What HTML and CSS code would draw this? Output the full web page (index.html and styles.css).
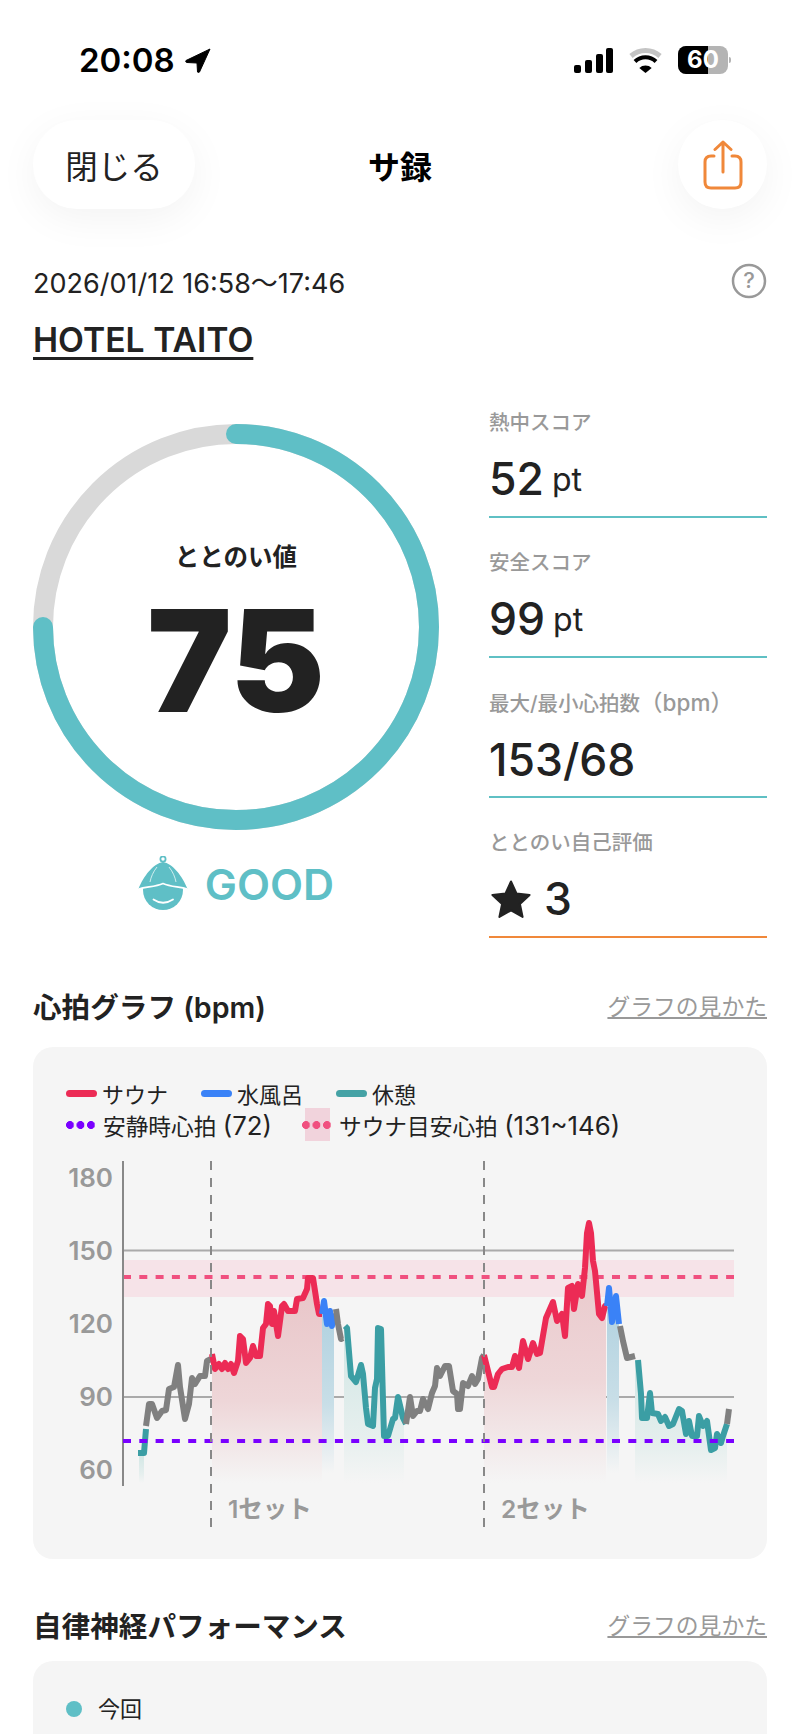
FILE: index.html
```html
<!DOCTYPE html>
<html lang="ja">
<head>
    <meta charset="UTF-8">
    <meta name="viewport" content="width=device-width, initial-scale=1.0">
    <title>サ録</title>
    <link rel="stylesheet" href="styles.css">
</head>
<body>

<div class="statusbar">
    <div class="clock">
        <span>20:08</span>
        <svg class="locator" viewBox="0 0 26 25"><path d="M25 1 L1 12.5 Q0 14 2 14.5 L12 15 L12.5 24 Q13.5 25.5 14.5 24 Z" fill="#000" stroke="#000" stroke-width="1" stroke-linejoin="round"/></svg>
    </div>
    <div class="status-icons">
        <svg class="signal" viewBox="0 0 39 25">
            <rect x="0" y="17" width="7" height="8" rx="2"/>
            <rect x="11" y="12" width="7" height="13" rx="2"/>
            <rect x="22" y="6" width="7" height="19" rx="2"/>
            <rect x="32" y="0" width="7" height="25" rx="2"/>
        </svg>
        <svg class="wifi" viewBox="0 0 33 25">
            <path d="M2 8 A22 22 0 0 1 31 8" fill="none" stroke="#c4c4c4" stroke-width="5"/>
            <path d="M6 13.5 A15 15 0 0 1 27 13.5" fill="none" stroke="#000" stroke-width="4"/>
            <path d="M16.5 25 L10.3 20 A9 9 0 0 1 22.7 20 Z" fill="#000"/>
        </svg>
        <div class="battery"><div class="battery-fill"></div><span class="battery-num">60</span></div>
        <div class="battery-nub"></div>
    </div>
</div>

<div class="navbar">
    <button class="nav-btn close-btn">閉じる</button>
    <div class="nav-title">サ録</div>
    <button class="nav-btn share-btn">
        <svg viewBox="0 0 40 50" width="40" height="50" fill="none" stroke="#f0883a" stroke-width="3" stroke-linecap="round" stroke-linejoin="round">
            <path d="M11 16 H8 Q2 16 2 22 V42 Q2 48 8 48 H32 Q38 48 38 42 V22 Q38 16 32 16 H29"/>
            <path d="M20 32 V2 M12 9.5 L20 2 L28 9.5"/>
        </svg>
    </button>
</div>

<div class="content">
    <div class="meta-row">
        <span class="meta-date">2026/01/12 16:58～17:46</span>
        <svg class="help" viewBox="0 0 36 36">
            <circle cx="18" cy="18" r="16" fill="none" stroke="#999" stroke-width="2.5"/>
            <text x="18" y="25" text-anchor="middle" class="help-mark">?</text>
        </svg>
    </div>
    <a class="place">HOTEL TAITO</a>

    <div class="score">
        <div class="score-left">
            <div class="ring">
                <svg viewBox="0 0 406 406" width="406" height="406">
                    <circle cx="203" cy="203" r="193" fill="none" stroke="#d9d9d9" stroke-width="20"/>
                    <circle cx="203" cy="203" r="193" fill="none" stroke="#5fbfc6" stroke-width="20" stroke-linecap="round" pathLength="100" stroke-dasharray="75 100" transform="rotate(-90 203 203)"/>
                </svg>
                <div class="ring-text">
                    <div class="ring-label">ととのい値</div>
                    <div class="ring-value">75</div>
                </div>
            </div>
            <div class="grade">
                <svg class="mascot" viewBox="0 0 50 56">
                    <circle cx="25" cy="3" r="2.6" fill="none" stroke="#5fbfc6" stroke-width="1.8"/>
                    <circle cx="25" cy="34" r="20" fill="#5fbfc6"/>
                    <path d="M0.5 33 C5.5 20 15.5 7.5 25 6 C34.5 7.5 44.5 20 49.5 33 C41 30.5 33 31 25 27.5 C17 31 9 30.5 0.5 33 Z" fill="#5fbfc6"/>
                    <path d="M0.5 33 C9 30.5 17 31 25 27.5 C33 31 41 30.5 49.5 33" fill="none" stroke="#fff" stroke-width="1.6"/>
                    <path d="M19 11 C15 16 13 21 12 26 M31 11 C35 16 37 21 38 26" fill="none" stroke="#fff" stroke-width="1" opacity="0.7"/>
                    <path d="M15.5 43.5 Q25 50 35 43.5" fill="none" stroke="#fff" stroke-width="1.8" stroke-linecap="round"/>
                </svg>
                <span class="grade-text">GOOD</span>
            </div>
        </div>
        <div class="stats">
            <div class="stat">
                <div class="stat-label">熱中スコア</div>
                <div class="stat-value">52<small>pt</small></div>
            </div>
            <div class="stat">
                <div class="stat-label">安全スコア</div>
                <div class="stat-value">99<small>pt</small></div>
            </div>
            <div class="stat">
                <div class="stat-label">最大/最小心拍数<span class="stat-unit">（bpm）</span></div>
                <div class="stat-value">153/68</div>
            </div>
            <div class="stat stat-self">
                <div class="stat-label">ととのい自己評価</div>
                <div class="stat-value">
                    <svg class="star" viewBox="0 0 40 38"><path d="M20 1.5 L25.6 13.6 L38.6 15 L28.9 24 L31.6 37 L20 30.4 L8.4 37 L11.1 24 L1.4 15 L14.4 13.6 Z" fill="#222" stroke="#222" stroke-width="2" stroke-linejoin="round"/></svg>3
                </div>
            </div>
        </div>
    </div>

    <div class="section-head first">
        <h2>心拍グラフ (bpm)</h2>
        <a class="guide-link">グラフの見かた</a>
    </div>
    <div class="card chart-card">
        <div class="legend">
            <span class="legend-item"><i class="swatch sauna"></i>サウナ</span>
            <span class="legend-item"><i class="swatch bath"></i>水風呂</span>
            <span class="legend-item"><i class="swatch rest"></i>休憩</span>
        </div>
        <div class="legend legend-wide">
            <span class="legend-item"><i class="dots calm"></i>安静時心拍&nbsp;<span class="legend-num">(72)</span></span>
            <span class="legend-item"><i class="dots target"></i>サウナ目安心拍&nbsp;<span class="legend-num">(131~146)</span></span>
        </div>
        <svg class="chart" viewBox="33 1150 734 385" width="734" height="385">
            <defs>
                <linearGradient id="fadeRed" x1="0" y1="0" x2="0" y2="1">
                    <stop offset="0" stop-color="#e8c4c7"/>
                    <stop offset="0.6" stop-color="#eed6d8"/>
                    <stop offset="1" stop-color="#f5f5f5"/>
                </linearGradient>
                <linearGradient id="fadeBlue" x1="0" y1="0" x2="0" y2="1">
                    <stop offset="0" stop-color="#aed0df"/>
                    <stop offset="0.6" stop-color="#c8dee7"/>
                    <stop offset="1" stop-color="#f5f5f5"/>
                </linearGradient>
                <linearGradient id="fadeTeal" x1="0" y1="0" x2="0" y2="1">
                    <stop offset="0" stop-color="#d0e6e4"/>
                    <stop offset="0.7" stop-color="#e6efee"/>
                    <stop offset="1" stop-color="#f5f5f5"/>
                </linearGradient>
            </defs>

            <rect x="123" y="1259" width="611" height="37" fill="#f6e3e8"/>
            <line x1="123" y1="1249.5" x2="734" y2="1249.5" class="grid"/>
            <line x1="123" y1="1396" x2="734" y2="1396" class="grid"/>

            <path fill="url(#fadeTeal)" d="M139 1482 V1452 H144 V1482 Z"/>
            <path fill="url(#fadeRed)" d="M212 1482 V1353 L215 1368 L219 1363 L222 1368 L225 1362 L228 1368 L231 1363 L234 1372 L238 1360 L240 1335 L243 1338 L246 1362 L250 1357 L253 1345 L256 1355 L260 1355 L263 1327 L266 1323 L268 1303 L270 1305 L272 1323 L274 1310 L278 1335 L282 1305 L284 1303 L288 1310 L295 1310 L297 1298 L303 1297 L307 1288 L308 1277 L313 1277 L317 1303 L319 1313 L322 1313 V1482 Z"/>
            <path fill="url(#fadeBlue)" d="M322 1472 V1313 L324 1300 L327 1323 L330 1310 L332 1325 L334 1318 V1472 Z"/>
            <path fill="url(#fadeTeal)" d="M344 1482 V1325 L347 1327 L351 1375 L356 1381 L361 1364 L363 1373 L366 1407 L368 1423 L373 1425 L375 1387 L377 1378 L378 1327 L381 1328 L384 1435 L388 1435 L393 1418 L395 1417 L398 1396 L403 1417 L404 1423 V1482 Z"/>
            <path fill="url(#fadeRed)" d="M484 1482 V1354 L492 1386 L494 1386 L498 1373 L502 1368 L508 1366 L512 1366 L515 1355 L519 1367 L523 1340 L528 1358 L533 1342 L537 1353 L540 1352 L546 1317 L553 1301 L557 1320 L562 1313 L565 1335 L568 1287 L572 1285 L574 1308 L578 1283 L582 1295 L585 1267 L587 1232 L589 1222 L591 1232 L593 1260 L595 1270 L599 1313 L602 1317 L605 1305 L606 1305 V1482 Z"/>
            <path fill="url(#fadeBlue)" d="M607 1472 V1305 L609 1287 L612 1321 L616 1295 L619 1323 V1472 Z"/>
            <path fill="url(#fadeTeal)" d="M635 1482 V1359 L641 1393 L642 1417 L647 1417 L650 1392 L652 1412 L658 1413 L661 1420 L665 1416 L669 1425 L673 1423 L679 1408 L682 1410 L686 1433 L689 1420 L692 1435 L697 1435 L699 1415 L703 1425 L707 1420 L711 1449 L715 1447 L717 1433 L721 1442 L723 1435 L727 1423 V1482 Z"/>

            <line x1="123" y1="1276" x2="734" y2="1276" class="target-line"/>
            <line x1="123" y1="1160" x2="123" y2="1485" class="axis"/>

            <text x="113" y="1186" class="tick">180</text>
            <text x="113" y="1259" class="tick">150</text>
            <text x="113" y="1332" class="tick">120</text>
            <text x="113" y="1405" class="tick">90</text>
            <text x="113" y="1478" class="tick">60</text>

            <polyline class="trace t-rest" points="138,1452 144,1452 146,1428"/>
            <polyline class="trace t-idle" points="146,1425 149,1403 152,1403 157,1417 162,1410 166,1409 169,1388 174,1386 178,1364 180,1386 185,1418 189,1403 192,1377 195,1383 200,1375 205,1375 207,1360 211,1358"/>
            <polyline class="trace t-sauna" points="212,1353 215,1368 219,1363 222,1368 225,1362 228,1368 231,1363 234,1372 238,1360 240,1335 243,1338 246,1362 250,1357 253,1345 256,1355 260,1355 263,1327 266,1323 268,1303 270,1305 272,1323 274,1310 278,1335 282,1305 284,1303 288,1310 295,1310 297,1298 303,1297 307,1288 308,1277 313,1277 317,1303 319,1313 322,1313"/>
            <polyline class="trace t-bath" points="322,1313 324,1300 327,1323 330,1310 332,1325 333,1315 335,1320"/>
            <polyline class="trace t-idle" points="336,1308 338,1323 341,1338 343,1337"/>
            <polyline class="trace t-rest" points="345,1325 347,1327 351,1375 356,1381 361,1364 363,1373 366,1407 368,1423 373,1425 375,1387 377,1378 378,1327 381,1328 384,1435 388,1435 393,1418 395,1417 398,1396 403,1417 406,1423"/>
            <polyline class="trace t-idle" points="406,1423 410,1396 413,1415 417,1410 420,1410 423,1398 428,1408 432,1392 435,1385 437,1367 440,1375 445,1365 449,1365 453,1390 457,1393 458,1408 460,1408 463,1382 468,1385 472,1375 475,1383 478,1378 482,1357 484,1354"/>
            <polyline class="trace t-sauna" points="484,1354 492,1386 494,1386 498,1373 502,1368 508,1366 512,1366 515,1355 519,1367 523,1340 528,1358 533,1342 537,1353 540,1352 546,1317 553,1301 557,1320 562,1313 565,1335 568,1287 572,1285 574,1308 578,1283 582,1295 585,1267 587,1232 589,1222 591,1232 593,1260 595,1270 599,1313 602,1317 605,1305 607,1305"/>
            <polyline class="trace t-bath" points="607,1305 609,1287 612,1321 616,1295 619,1323"/>
            <polyline class="trace t-idle" points="620,1325 623,1340 627,1357 635,1355"/>
            <polyline class="trace t-rest" points="638,1359 641,1393 642,1417 647,1417 650,1392 652,1412 658,1413 661,1420 665,1416 669,1425 673,1423 679,1408 682,1410 686,1433 689,1420 692,1435 697,1435 699,1415 703,1425 707,1420 711,1449 715,1447 717,1433 721,1442 723,1435 727,1423"/>
            <polyline class="trace t-idle" points="727,1423 729,1408"/>

            <line x1="123" y1="1440" x2="734" y2="1440" class="calm-line"/>
            <line x1="211" y1="1160" x2="211" y2="1527" class="set-line"/>
            <line x1="484" y1="1160" x2="484" y2="1527" class="set-line"/>
            <text x="228" y="1517" class="set-label">1セット</text>
            <text x="501" y="1517" class="set-label">2セット</text>
        </svg>
    </div>

    <div class="section-head second">
        <h2>自律神経パフォーマンス</h2>
        <a class="guide-link">グラフの見かた</a>
    </div>
    <div class="card perf-card">
        <div class="perf-legend"><i class="perf-dot"></i>今回</div>
    </div>
</div>

</body>
</html>
```

FILE: styles.css
```css
* {
    box-sizing: border-box;
}

html, body {
    margin: 0;
    height: 1734px;
    overflow: hidden;
}

body {
    font-family: Inter, "Noto Sans CJK JP", sans-serif;
    background-color: #fff;
    color: #222;
    display: flex;
    flex-direction: column;
}

/* status bar */
.statusbar {
    height: 120px;
    padding: 0 69px 0 79px;
    display: flex;
    justify-content: space-between;
    align-items: center;
    flex-shrink: 0;
}

.clock {
    display: flex;
    align-items: center;
    gap: 10px;
    font-size: 33px;
    font-weight: 600;
    color: #000;
}

.locator {
    width: 26px;
    height: 25px;
}

.status-icons {
    display: flex;
    align-items: center;
    gap: 16px;
}

.signal {
    width: 39px;
    height: 25px;
}

.wifi {
    width: 33px;
    height: 25px;
}

.battery {
    position: relative;
    width: 50px;
    height: 28px;
    border-radius: 8px;
    overflow: hidden;
    background-color: #b4b4b4;
}

.battery-fill {
    width: 30px;
    height: 100%;
    background-color: #000;
}

.battery-num {
    position: absolute;
    inset: 0;
    text-align: center;
    font-size: 24px;
    font-weight: 700;
    line-height: 28px;
    color: #fff;
}

.battery-nub {
    width: 2px;
    height: 6px;
    margin-left: -15px;
    border-radius: 0 2px 2px 0;
    background-color: #b4b4b4;
}

/* nav */
.navbar {
    padding: 0 33px;
    height: 89px;
    display: grid;
    grid-template-columns: 1fr auto 1fr;
    align-items: center;
    flex-shrink: 0;
}

.nav-btn {
    border: none;
    background-color: #fff;
    height: 89px;
    box-shadow: 0 10px 40px rgba(0, 0, 0, 0.05);
    font-family: inherit;
    color: #222;
    padding: 0;
}

.close-btn {
    width: 162px;
    border-radius: 44px;
    font-size: 32.5px;
}

.share-btn {
    width: 89px;
    border-radius: 50%;
    justify-self: end;
    display: flex;
    align-items: center;
    justify-content: center;
}

.nav-title {
    font-size: 32px;
    font-weight: 700;
    color: #000;
}

/* top of content */
.content {
    flex: 1;
    padding: 54px 33px 0;
    display: flex;
    flex-direction: column;
    min-height: 0;
}

.meta-row {
    display: flex;
    justify-content: space-between;
    align-items: center;
    height: 36px;
}

.meta-date {
    font-size: 27px;
}

.help {
    width: 36px;
    height: 36px;
}

.help-mark {
    font-size: 22px;
    font-weight: 500;
    fill: #999;
}

.place {
    align-self: flex-start;
    margin-top: 21px;
    font-size: 33.7px;
    line-height: 40px;
    font-weight: 600;
    text-decoration: underline;
    text-decoration-thickness: 3px;
    text-underline-offset: 5px;
}

/* score */
.score {
    margin-top: 48px;
    display: flex;
    justify-content: space-between;
}

.score-left {
    padding-top: 16px;
    width: 406px;
}

.ring {
    position: relative;
    width: 406px;
    height: 406px;
}

.ring svg {
    display: block;
}

.ring-text {
    position: absolute;
    inset: 0;
    display: flex;
    flex-direction: column;
    align-items: center;
}

.ring-label {
    margin-top: 113px;
    font-size: 24.5px;
    line-height: 40px;
    font-weight: 600;
}

.ring-value {
    margin-top: 8px;
    font-size: 142px;
    line-height: 150px;
    font-weight: 900;
}

.grade {
    margin-top: 26px;
    display: flex;
    align-items: center;
    justify-content: center;
    gap: 17px;
}

.mascot {
    width: 50px;
    height: 56px;
}

.grade-text {
    font-size: 43px;
    font-weight: 600;
    color: #5fbfc6;
}

.stats {
    width: 278px;
    display: flex;
    flex-direction: column;
    gap: 30px;
}

.stat {
    height: 110px;
    border-bottom: 2px solid #5fc0c4;
    display: flex;
    flex-direction: column;
}

.stat-self {
    border-bottom-color: #f0883a;
}

.stat-label {
    font-size: 20.5px;
    line-height: 30px;
    font-weight: 500;
    color: #999;
    white-space: nowrap;
}

.stat-unit {
    font-size: 22.5px;
}

.stat-value {
    flex: 1;
    display: flex;
    align-items: center;
    padding-top: 4px;
    font-size: 44.5px;
    font-weight: 500;
}

.stat-value small {
    font-size: 32px;
    font-weight: 400;
    margin-left: 8px;
}

.star {
    width: 40px;
    height: 38px;
    margin: 0 13px 0 2px;
}

/* sections */
.section-head {
    height: 40px;
    display: flex;
    justify-content: space-between;
    align-items: center;
}

.section-head.first {
    margin-top: 47px;
}

.section-head.second {
    margin-top: 45px;
}

.section-head h2 {
    margin: 0;
    font-size: 28.6px;
    font-weight: 600;
}

.guide-link {
    font-size: 22.8px;
    color: #999;
    text-decoration: underline;
}

.card {
    background-color: #f5f5f5;
    border-radius: 20px;
}

.chart-card {
    position: relative;
    z-index: 0;
    margin-top: 22px;
    height: 512px;
    padding: 30px 33px 0;
    flex-shrink: 0;
}

.legend {
    display: flex;
    gap: 33px;
    height: 32px;
    align-items: center;
}

.legend-wide {
    gap: 30px;
}

.legend-wide .legend-item {
    font-size: 22.7px;
}

.legend-item {
    display: flex;
    align-items: center;
    font-size: 22px;
    white-space: nowrap;
}

.legend-num {
    font-size: 25.8px;
}

.swatch {
    width: 31px;
    height: 7px;
    border-radius: 4px;
    margin-right: 5px;
}

.swatch.sauna {
    background-color: #ec2b55;
}

.swatch.bath {
    background-color: #3a82f7;
}

.swatch.rest {
    background-color: #45a2a5;
}

.dots {
    position: relative;
    width: 29px;
    height: 8px;
    margin-right: 8px;
    background-size: 10.5px 8px;
}

.dots.calm {
    background-image: radial-gradient(circle at 4px 4px, #7a00ff 3.7px, transparent 4.2px);
}

.dots.target {
    background-image: radial-gradient(circle at 4px 4px, #f0507f 3.7px, transparent 4.2px);
}

.dots.target::before {
    content: "";
    position: absolute;
    z-index: -1;
    left: 3px;
    top: -13px;
    width: 25px;
    height: 33px;
    background-color: #f1d3dc;
}

.chart {
    display: block;
    margin: 10px 0 0 -33px;
}

.grid {
    stroke: #aaa;
    stroke-width: 2;
}

.axis {
    stroke: #888;
    stroke-width: 2;
}

.target-line {
    stroke: #f0507f;
    stroke-width: 4;
    stroke-dasharray: 8 8.3;
}

.calm-line {
    stroke: #7a00ff;
    stroke-width: 4;
    stroke-dasharray: 8 8.3;
}

.set-line {
    stroke: #888;
    stroke-width: 2;
    stroke-dasharray: 9 8;
}

.tick {
    font-size: 26px;
    font-weight: 600;
    fill: #999;
    text-anchor: end;
}

.set-label {
    font-size: 24.5px;
    font-weight: 600;
    fill: #999;
}

.trace {
    fill: none;
    stroke-width: 6;
    stroke-linejoin: round;
}

.t-sauna {
    stroke: #ec2b55;
}

.t-bath {
    stroke: #3a82f7;
}

.t-rest {
    stroke: #3b9ea4;
}

.t-idle {
    stroke: #808080;
}

.perf-card {
    margin-top: 17px;
    flex: 1;
    border-radius: 20px 20px 0 0;
    padding: 33px;
}

.perf-legend {
    display: flex;
    align-items: center;
    font-size: 22px;
    line-height: 30px;
}

.perf-dot {
    width: 16px;
    height: 16px;
    border-radius: 50%;
    background-color: #5fbfc6;
    margin-right: 16px;
}
```
